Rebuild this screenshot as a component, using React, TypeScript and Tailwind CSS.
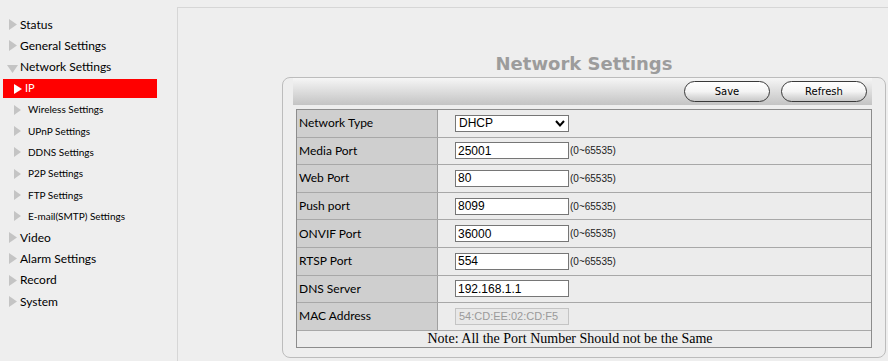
import React from "react"

const menu = [
  { label: "Status", level: 0 },
  { label: "General Settings", level: 0 },
  { label: "Network Settings", level: 0, open: true },
  { label: "IP", level: 1, active: true },
  { label: "Wireless Settings", level: 1 },
  { label: "UPnP Settings", level: 1 },
  { label: "DDNS Settings", level: 1 },
  { label: "P2P Settings", level: 1 },
  { label: "FTP Settings", level: 1 },
  { label: "E-mail(SMTP) Settings", level: 1 },
  { label: "Video", level: 0 },
  { label: "Alarm Settings", level: 0 },
  { label: "Record", level: 0 },
  { label: "System", level: 0 },
]

const rows = [
  { label: "Network Type", type: "select", value: "DHCP" },
  { label: "Media Port", type: "port", value: "25001" },
  { label: "Web Port", type: "port", value: "80" },
  { label: "Push port", type: "port", value: "8099" },
  { label: "ONVIF Port", type: "port", value: "36000" },
  { label: "RTSP Port", type: "port", value: "554" },
  { label: "DNS Server", type: "text", value: "192.168.1.1" },
  { label: "MAC Address", type: "disabled", value: "54:CD:EE:02:CD:F5" },
]

function Arrow({ down, color, w = 7, h = 11 }: { down?: boolean; color: string; w?: number; h?: number }) {
  if (down) {
    return (
      <svg width={11} height={8} viewBox="0 0 11 8">
        <polygon points="0,0 11,0 5.5,8" fill={color} />
      </svg>
    )
  }
  return (
    <svg width={w} height={h} viewBox={`0 0 ${w} ${h}`}>
      <polygon points={`0,0 ${w},${h / 2} 0,${h}`} fill={color} />
    </svg>
  )
}

function Sidebar() {
  return (
    <div className="w-[177px] shrink-0 pt-[14px] font-['Lato',sans-serif] text-black">
      {menu.map((item) => {
        if (item.active) {
          return (
            <div key={item.label} className="h-[21.3px] flex items-center">
              <div className="ml-[3px] w-[154px] h-[19px] bg-[#ff0000] flex items-center pl-[11px] gap-[3px] text-white text-[11px]">
                <Arrow color="#ffffff" w={8} h={10} />
                <span>{item.label}</span>
              </div>
            </div>
          )
        }
        if (item.level === 1) {
          return (
            <div key={item.label} className="h-[21.3px] flex items-center pl-[14px] gap-[7px] text-[10px]">
              <Arrow color="#c4c4c4" w={7} h={10} />
              <span>{item.label}</span>
            </div>
          )
        }
        return (
          <div key={item.label} className="h-[21.3px] flex items-center pl-[9px] gap-[3px] text-[12px]">
            {item.open ? (
              <span className="-ml-[2px] mt-[4px]">
                <Arrow down color="#c4c4c4" />
              </span>
            ) : (
              <Arrow color="#c4c4c4" w={8} h={11} />
            )}
            <span className={item.open ? "-ml-[1px]" : ""}>{item.label}</span>
          </div>
        )
      })}
    </div>
  )
}

function Field({ type, value }: { type: string; value: string }) {
  if (type === "select") {
    return (
      <div className="w-[114px] h-[17px] border border-[#767676] bg-white flex items-center justify-between px-[3px] text-[12px] font-['Liberation_Sans',sans-serif]">
        <span>{value}</span>
        <svg width={10} height={7} viewBox="0 0 10 7">
          <polyline points="1,1 5,5.5 9,1" fill="none" stroke="#000" strokeWidth={2} />
        </svg>
      </div>
    )
  }
  const disabled = type === "disabled"
  return (
    <div className="flex items-center">
      <div
        className={
          disabled
            ? "w-[114px] h-[17px] border border-[#c4c4c4] bg-[#e8e8e8] flex items-center px-[3px] text-[11px] text-[#9a9a9a] font-['Liberation_Sans',sans-serif]"
            : "w-[114px] h-[17px] border border-[#767676] bg-white flex items-center px-[2px] text-[12px] font-['Liberation_Sans',sans-serif]"
        }
      >
        {value}
      </div>
      {type === "port" && (
        <span className="ml-[1px] text-[10px] text-[#222] font-['Liberation_Sans',sans-serif]">(0~65535)</span>
      )}
    </div>
  )
}

function PillButton({ children }: { children: React.ReactNode }) {
  return (
    <div className="w-[86px] h-[21px] rounded-full border border-[#3a3a3a] bg-gradient-to-b from-[#ffffff] via-[#f4f4f4] to-[#c8c8c8] flex items-center justify-center text-[10px] text-black font-['DejaVu_Sans',sans-serif]">
      {children}
    </div>
  )
}

export default function App() {
  return (
    <div className="w-[888px] h-[361px] bg-[#eeeeee] flex overflow-hidden">
      <Sidebar />
      <div className="flex-1 mt-[7px] border-t border-l border-[#d6d6d6]">
        <div className="ml-[104px] w-[604px]">
          <div className="mt-[42px] h-[24px] text-center text-[18px] font-bold text-[#9c9c9c] font-['DejaVu_Sans',sans-serif]">
            Network Settings
          </div>
          <div className="mt-[3px] h-[281px] rounded-[8px] border border-[#bcbcbc] pl-[10px]">
            <div className="w-[579px] h-[27px] bg-gradient-to-b from-[#f6f6f6] to-[#c4c4c4] flex items-center justify-end gap-[11px] pr-[5px]">
              <PillButton>Save</PillButton>
              <PillButton>Refresh</PillButton>
            </div>
            <div className="mt-[4px] ml-[3px] w-[576px] border border-[#8c8c8c] bg-[#ececec]">
              {rows.map((row) => (
                <div key={row.label} className="h-[27.6px] flex border-b border-[#a8a8a8]">
                  <div className="w-[141px] bg-[#cfcfcf] border-r border-[#a0a0a0] flex items-center pl-[2px] text-[12px] text-black font-['Lato',sans-serif]">
                    {row.label}
                  </div>
                  <div className="flex-1 flex items-center pl-[17px]">
                    <Field type={row.type} value={row.value} />
                  </div>
                </div>
              ))}
              <div className="h-[16px] flex items-center justify-center pr-[28px] text-[14px] leading-none text-black font-['Liberation_Serif',serif]">
                Note: All the Port Number Should not be the Same
              </div>
            </div>
          </div>
        </div>
      </div>
    </div>
  )
}
